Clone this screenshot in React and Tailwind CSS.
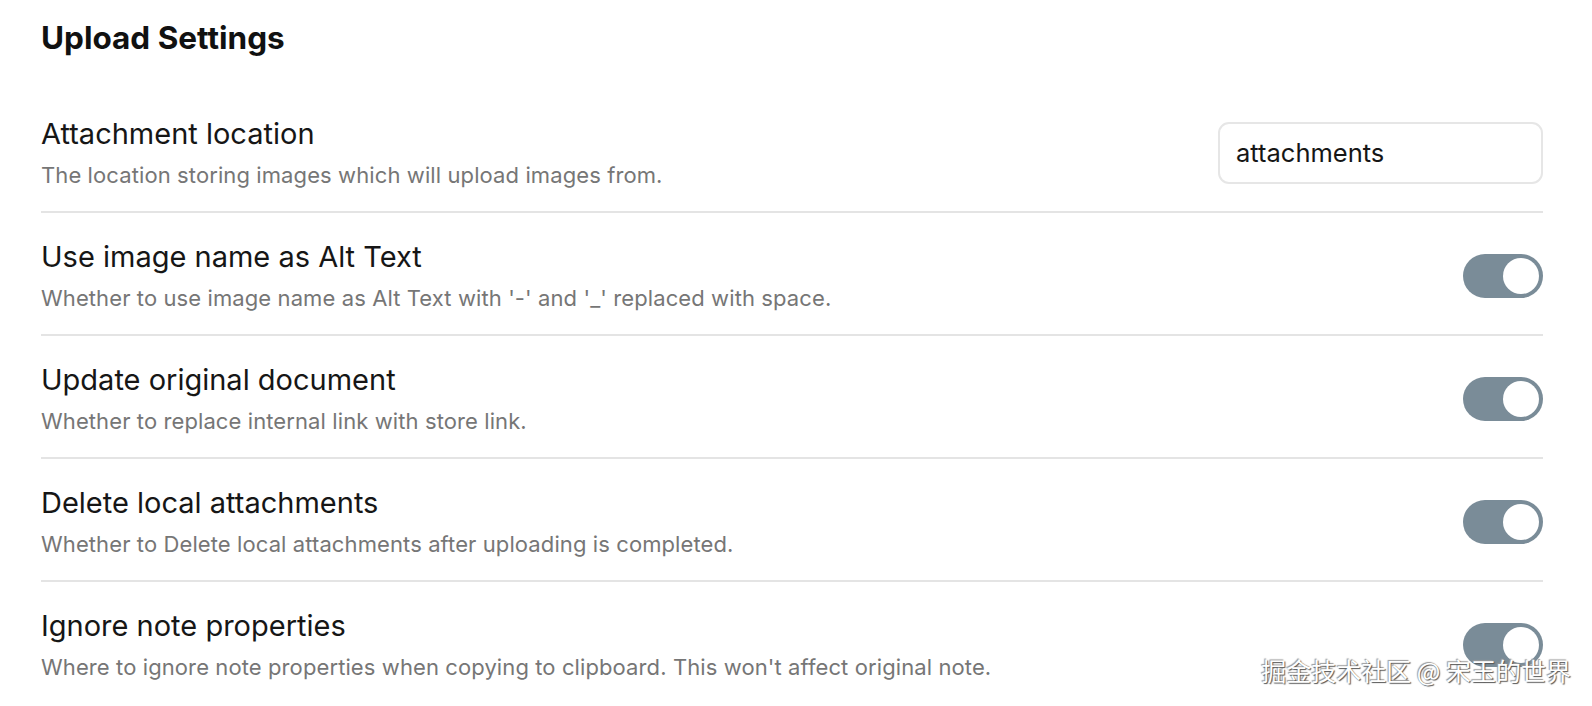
import React, { useState } from "react";

const settings = [
  {
    name: "Use image name as Alt Text",
    desc: "Whether to use image name as Alt Text with '-' and '_' replaced with space.",
  },
  {
    name: "Update original document",
    desc: "Whether to replace internal link with store link.",
  },
  {
    name: "Delete local attachments",
    desc: "Whether to Delete local attachments after uploading is completed.",
  },
  {
    name: "Ignore note properties",
    desc: "Where to ignore note properties when copying to clipboard. This won't affect original note.",
  },
];

function Toggle({ on, onClick }) {
  return (
    <button
      onClick={onClick}
      className={`relative w-[80px] h-[44px] shrink-0 rounded-full ${on ? "bg-[#7a8c98]" : "bg-[#d4d4d4]"}`}
    >
      <span
        className={`absolute top-[4px] w-[36px] h-[36px] rounded-full bg-white ${on ? "right-[4px]" : "left-[4px]"}`}
      />
    </button>
  );
}

function Row({ name, desc, first, children }) {
  return (
    <div
      className={`flex items-center justify-between gap-8 pt-[26px] pb-[22px] ${first ? "" : "border-t-2 border-[#e4e4e4]"}`}
    >
      <div className="min-w-0">
        <div className="text-[29px] leading-[36px] text-[#161616]">{name}</div>
        <div className="mt-[9px] text-[22px] leading-[28px] tracking-[0.1px] text-[#767676]">{desc}</div>
      </div>
      {children}
    </div>
  );
}

export default function App() {
  const [location, setLocation] = useState("attachments");
  const [toggles, setToggles] = useState([true, true, true, true]);

  return (
    <div
      className="relative w-full h-[706px] overflow-hidden bg-white pl-[41px] pr-[49px]"
      style={{ fontFamily: "Inter, 'Noto Sans', sans-serif" }}
    >
      <h2 className="pt-[18px] h-[90px] text-[31.5px] leading-[40px] font-bold text-[#111]">
        Upload Settings
      </h2>

      <Row
        first
        name="Attachment location"
        desc="The location storing images which will upload images from."
      >
        <input
          value={location}
          onChange={(e) => setLocation(e.target.value)}
          className="w-[325px] h-[62px] shrink-0 rounded-[11px] border-2 border-[#e6e6e6] px-[16px] text-[25.5px] text-[#161616] outline-none"
        />
      </Row>

      {settings.map((s, i) => (
        <Row key={s.name} name={s.name} desc={s.desc}>
          <Toggle
            on={toggles[i]}
            onClick={() => setToggles(toggles.map((t, j) => (j === i ? !t : t)))}
          />
        </Row>
      ))}

      <div
        className="absolute right-[21px] bottom-[21px] text-[25px] leading-[30px] text-white [text-shadow:1px_1px_1px_#555,-1px_-1px_1px_#999]"
        style={{ fontFamily: "'Noto Sans CJK SC', sans-serif" }}
      >
        掘金技术社区 @ 宋玉的世界
      </div>
    </div>
  );
}
